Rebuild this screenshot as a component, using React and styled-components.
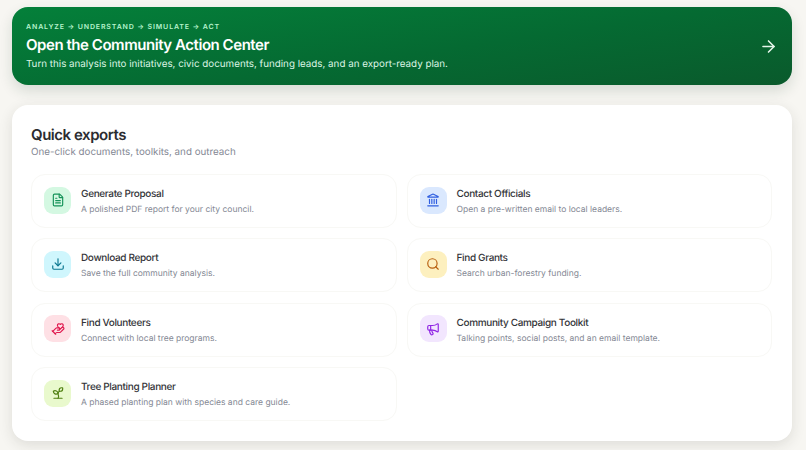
import React from "react";
import styled, { createGlobalStyle } from "styled-components";
import { ArrowRight, Download, FileText, HandHeart, Landmark, Megaphone, Search, Sprout } from "lucide-react";

const GlobalStyle = createGlobalStyle`
  html, body {
    margin: 0;
    height: 100%;
    overflow: hidden;
    background: #f7f6f2;
    font-family: "Inter", "Liberation Sans", sans-serif;
    text-rendering: geometricPrecision;
  }
  * { box-sizing: border-box; }
`;

const Page = styled.div`
  display: flex;
  flex-direction: column;
  gap: 20px;
  padding: 7px 14px 0 12px;
`;

const Banner = styled.a`
  display: flex;
  align-items: center;
  justify-content: space-between;
  height: 78px;
  padding: 0 14px;
  border-radius: 16px;
  color: #fff;
  background: linear-gradient(172deg, #04803a 0%, #056a32 55%, #0a5a2c 100%);
  box-shadow: 0 6px 14px rgba(20, 60, 35, 0.14);
`;

const Eyebrow = styled.div`
  font-size: 7px;
  line-height: 10px;
  font-weight: 600;
  letter-spacing: 0.87px;
  color: #b6f3cc;
  margin-top: 1px;
`;

const BannerTitle = styled.div`
  margin-top: 2px;
  font-size: 15px;
  line-height: 21px;
  font-weight: 600;
  letter-spacing: -0.45px;
`;

const BannerText = styled.div`
  margin-top: 2px;
  font-size: 9.8px;
  line-height: 15px;
  color: #dcf5e5;
`;

const Panel = styled.section`
  height: 336px;
  padding: 20px 20px 0 19px;
  border-radius: 16px;
  background: #fff;
  box-shadow: 0 4px 14px rgba(40, 40, 30, 0.12);
`;

const PanelTitle = styled.h2`
  margin: 0;
  font-size: 15px;
  line-height: 20px;
  font-weight: 600;
  letter-spacing: -0.46px;
  color: #2b2c30;
`;

const PanelText = styled.p`
  margin: 0;
  font-size: 9.8px;
  line-height: 15px;
  color: #848894;
`;

const Grid = styled.div`
  display: grid;
  grid-template-columns: 365.5px 365.5px;
  grid-auto-rows: 54px;
  gap: 10.4px 10px;
  margin-top: 14px;
`;

const Item = styled.div`
  display: flex;
  align-items: center;
  gap: 10px;
  padding: 0 0 2px 12px;
  border: 1px solid #f8f8f5;
  border-radius: 14px;
  background: #fff;
`;

const IconBox = styled.div`
  display: flex;
  align-items: center;
  justify-content: center;
  flex: none;
  width: 27px;
  height: 27px;
  border-radius: 9px;
  background: ${props => props.$bg};
  color: ${props => props.$fg};
`;

const ItemBody = styled.div`
  padding-top: 4px;
`;

const ItemTitle = styled.div`
  font-size: 10px;
  line-height: 14px;
  font-weight: 500;
  letter-spacing: -0.35px;
  color: #333438;
`;

const ItemText = styled.div`
  font-size: 8.5px;
  line-height: 13px;
  margin-top: 3px;
  color: #848894;
`;

const items = [
  { title: "Generate Proposal", text: "A polished PDF report for your city council.", Icon: FileText, bg: "#d4f8e2", fg: "#16935a" },
  { title: "Contact Officials", text: "Open a pre-written email to local leaders.", Icon: Landmark, bg: "#dae8fe", fg: "#2f5ee0" },
  { title: "Download Report", text: "Save the full community analysis.", Icon: Download, bg: "#cff6fd", fg: "#0b7790" },
  { title: "Find Grants", text: "Search urban-forestry funding.", Icon: Search, bg: "#fdf0bf", fg: "#b8600f" },
  { title: "Find Volunteers", text: "Connect with local tree programs.", Icon: HandHeart, bg: "#fee0e5", fg: "#e0194f" },
  { title: "Community Campaign Toolkit", text: "Talking points, social posts, and an email template.", Icon: Megaphone, bg: "#f2e6fe", fg: "#9026e4" },
  { title: "Tree Planting Planner", text: "A phased planting plan with species and care guide.", Icon: Sprout, bg: "#e9f9cd", fg: "#4f7f10" },
];

export default function App() {
  return (
    <Page>
      <GlobalStyle />
      <Banner>
        <div>
          <Eyebrow>ANALYZE → UNDERSTAND → SIMULATE → ACT</Eyebrow>
          <BannerTitle>Open the Community Action Center</BannerTitle>
          <BannerText>Turn this analysis into initiatives, civic documents, funding leads, and an export-ready plan.</BannerText>
        </div>
        <ArrowRight size={19} strokeWidth={2} color="#e6f7ec" />
      </Banner>
      <Panel>
        <PanelTitle>Quick exports</PanelTitle>
        <PanelText>One-click documents, toolkits, and outreach</PanelText>
        <Grid>
          {items.map(({ title, text, Icon, bg, fg }) => (
            <Item key={title}>
              <IconBox $bg={bg} $fg={fg}>
                <Icon size={14} strokeWidth={2} />
              </IconBox>
              <ItemBody>
                <ItemTitle>{title}</ItemTitle>
                <ItemText>{text}</ItemText>
              </ItemBody>
            </Item>
          ))}
        </Grid>
      </Panel>
    </Page>
  );
}
